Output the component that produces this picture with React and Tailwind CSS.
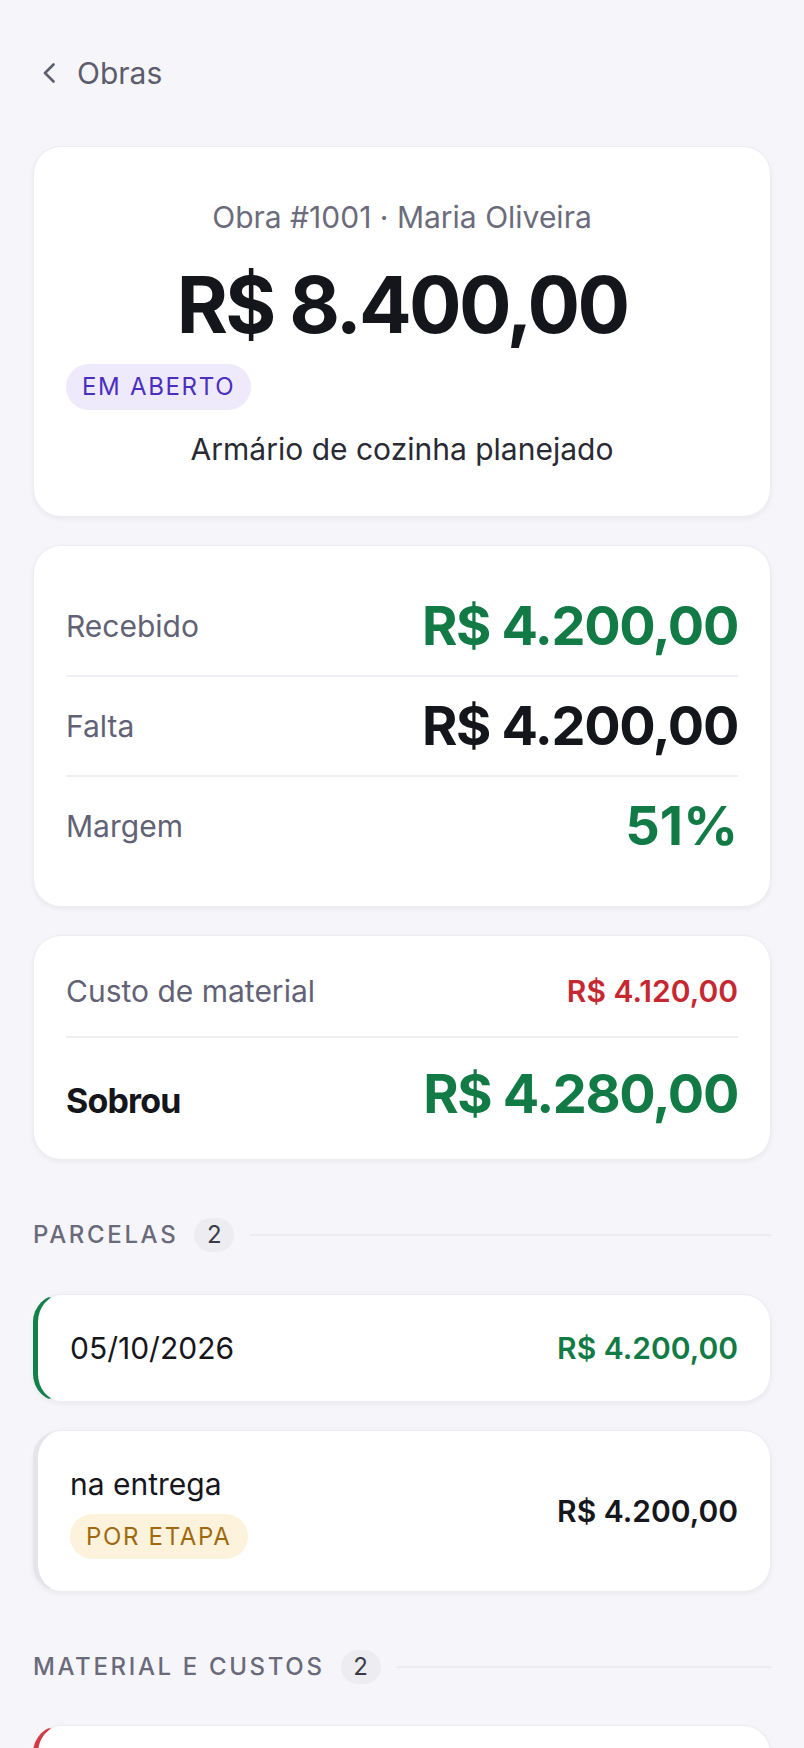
import React from "react";

function SectionHeader({ label, count }) {
  return (
    <div className="flex items-center gap-4 h-[34px]">
      <span className="text-[24px] leading-[30px] tracking-[0.11em] text-[#6a6a7a] font-medium whitespace-nowrap">
        {label}
      </span>
      <span className="h-[34px] min-w-[40px] px-3 rounded-full bg-[#ececf1] text-[24px] leading-[34px] text-[#3b3b45] text-center">
        {count}
      </span>
      <div className="flex-1 h-[2px] bg-[#ebebf0]" />
    </div>
  );
}

export default function App() {
  return (
    <div className="min-h-screen bg-[#f6f6fa] px-[33px] pb-20 font-['Inter','Noto_Sans',sans-serif] text-[#16161d]">
      {/* Header */}
      <div className="pt-[52px] flex items-center h-[94px]">
        <div className="flex items-center gap-[22px] h-[42px]">
          <svg width="12" height="20" viewBox="0 0 12 20" fill="none" className="ml-[10px]">
            <polyline
              points="10.5,1.5 2,10 10.5,18.5"
              stroke="#5e5e6e"
              strokeWidth="2.6"
              strokeLinecap="round"
              strokeLinejoin="round"
            />
          </svg>
          <span className="text-[30px] leading-[42px] text-[#5c5c6c]">Obras</span>
        </div>
      </div>

      <div className="mt-[52px] flex flex-col gap-[28px]">
        {/* Card 1 */}
        <div className="bg-white rounded-[28px] border border-[#ececf1] shadow-[0_2px_5px_rgba(20,20,40,0.06)] px-8 pt-[50px] pb-[46px] flex flex-col">
          <div className="text-center text-[30px] leading-[40px] text-[#6b6b7c]">
            Obra #1001 · Maria Oliveira
          </div>
          <div className="mt-[29px] text-center text-[78px] leading-[78px] font-bold tracking-[-0.035em] text-[#15151c]">
            R$ 8.400,00
          </div>
          <div className="mt-[20px] self-start rounded-full bg-[#eeeafc] px-4 py-2 text-[24px] leading-[30px] tracking-[0.07em] text-[#4a2fbf]">
            EM ABERTO
          </div>
          <div className="mt-[18px] text-center text-[30px] leading-[42px] text-[#2a2a34]">
            Armário de cozinha planejado
          </div>
        </div>

        {/* Card 2 */}
        <div className="bg-white rounded-[28px] border border-[#ececf1] shadow-[0_2px_5px_rgba(20,20,40,0.06)] px-8 py-[31px] flex flex-col">
          <div className="flex items-center justify-between py-[19px]">
            <span className="text-[30px] leading-[42px] text-[#626276]">Recebido</span>
            <span className="text-[54px] leading-[60px] font-bold tracking-tight text-[#127a45]">R$ 4.200,00</span>
          </div>
          <div className="h-[2px] bg-[#efeff3]" />
          <div className="flex items-center justify-between py-[19px]">
            <span className="text-[30px] leading-[42px] text-[#626276]">Falta</span>
            <span className="text-[54px] leading-[60px] font-bold tracking-tight text-[#15151c]">R$ 4.200,00</span>
          </div>
          <div className="h-[2px] bg-[#efeff3]" />
          <div className="flex items-center justify-between py-[19px]">
            <span className="text-[30px] leading-[42px] text-[#626276]">Margem</span>
            <span className="text-[54px] leading-[60px] font-bold text-[#127a45]">51%</span>
          </div>
        </div>

        {/* Card 3 */}
        <div className="bg-white rounded-[28px] border border-[#ececf1] shadow-[0_2px_5px_rgba(20,20,40,0.06)] px-8 py-[8px] flex flex-col">
          <div className="flex items-baseline justify-between pt-[26px] pb-[24px]">
            <span className="text-[30px] leading-[42px] text-[#626276]">Custo de material</span>
            <span className="text-[30px] leading-[42px] font-semibold text-[#c62832]">R$ 4.120,00</span>
          </div>
          <div className="h-[2px] bg-[#efeff3]" />
          <div className="flex items-baseline justify-between pt-[26px] pb-[27px]">
            <span className="text-[34px] leading-[42px] font-bold tracking-tight text-[#15151c]">Sobrou</span>
            <span className="text-[54px] leading-[60px] font-bold tracking-tight text-[#127a45]">R$ 4.280,00</span>
          </div>
        </div>
      </div>

      {/* Parcelas */}
      <div className="mt-[58px]">
        <SectionHeader label="PARCELAS" count="2" />
      </div>
      <div className="mt-[42px] flex flex-col gap-[28px]">
        <div className="bg-white rounded-[28px] border border-[#ececf1] border-l-[5px] border-l-[#13804a] shadow-[0_2px_5px_rgba(20,20,40,0.06)] px-8 py-8 flex items-center justify-between">
          <span className="text-[30px] leading-[42px] text-[#16161d]">05/10/2026</span>
          <span className="text-[30px] leading-[42px] font-semibold text-[#127a45]">R$ 4.200,00</span>
        </div>
        <div className="bg-white rounded-[28px] border border-[#ececf1] border-l-[5px] border-l-[#e4e4ea] shadow-[0_2px_5px_rgba(20,20,40,0.06)] px-8 py-8 flex items-center justify-between">
          <div className="flex flex-col items-start">
            <span className="text-[30px] leading-[42px] text-[#16161d]">na entrega</span>
            <span className="mt-[9px] rounded-full bg-[#fdf3dc] px-4 py-2 text-[24px] leading-[29px] tracking-[0.07em] text-[#a0690f]">
              POR ETAPA
            </span>
          </div>
          <span className="text-[30px] leading-[42px] font-semibold text-[#16161d]">R$ 4.200,00</span>
        </div>
      </div>

      {/* Material e custos */}
      <div className="mt-[58px]">
        <SectionHeader label="MATERIAL E CUSTOS" count="2" />
      </div>
      <div className="mt-[41px] flex flex-col gap-[28px]">
        <div className="bg-white rounded-[28px] border border-[#ececf1] border-l-[5px] border-l-[#d23a44] shadow-[0_2px_5px_rgba(20,20,40,0.06)] px-8 py-8 flex items-center justify-between">
          <span className="text-[30px] leading-[42px] text-[#16161d]">Chapa MDF branco</span>
          <span className="text-[30px] leading-[42px] font-semibold text-[#c62832]">R$ 2.600,00</span>
        </div>
        <div className="bg-white rounded-[28px] border border-[#ececf1] border-l-[5px] border-l-[#d23a44] shadow-[0_2px_5px_rgba(20,20,40,0.06)] px-8 py-8 flex items-center justify-between">
          <span className="text-[30px] leading-[42px] text-[#16161d]">Ferragens</span>
          <span className="text-[30px] leading-[42px] font-semibold text-[#c62832]">R$ 1.520,00</span>
        </div>
      </div>
    </div>
  );
}
